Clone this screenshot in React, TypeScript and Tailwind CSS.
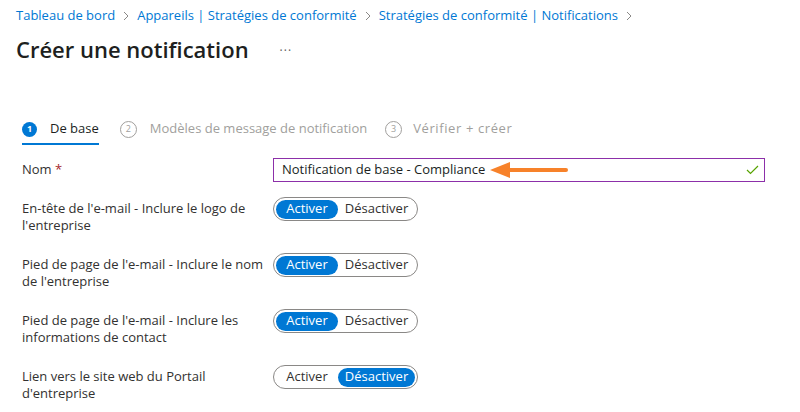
import React from "react";

const crumbs = [
  "Tableau de bord",
  "Appareils | Stratégies de conformité",
  "Stratégies de conformité | Notifications",
];

const steps = [
  { n: "1", label: "De base", active: true, gap: "mr-[21px]", ml: "ml-[13px] text-[13px]" },
  { n: "2", label: "Modèles de message de notification", active: false, gap: "mr-[18px]", ml: "ml-[13px] text-[13px]" },
  { n: "3", label: "Vérifier + créer", active: false, gap: "mr-0", ml: "ml-[11px] text-[13px] tracking-[0.6px]" },
];

const rows = [
  { label: "En-tête de l'e-mail - Inclure le logo de l'entreprise", on: true },
  { label: "Pied de page de l'e-mail - Inclure le nom de l'entreprise", on: true },
  { label: "Pied de page de l'e-mail - Inclure les informations de contact", on: true },
  { label: "Lien vers le site web du Portail d'entreprise", on: false },
];

const Chevron = () => (
  <svg width="8" height="12" viewBox="0 0 8 12" className="mx-[7px]">
    <path d="M2 2 L6 6 L2 10" fill="none" stroke="#8a8886" strokeWidth="1" />
  </svg>
);

const Toggle = ({ on }: { on: boolean }) => (
  <div className="flex h-[24px] w-[145px] shrink-0 items-center rounded-full border border-[#8a8886] px-[2px]">
    <span
      className={
        on
          ? "flex h-[19px] w-[62px] items-center justify-center rounded-full bg-[#0078d4] text-white"
          : "flex h-[19px] w-[62px] items-center justify-center text-[#323130]"
      }
    >
      Activer
    </span>
    <span
      className={
        on
          ? "flex h-[19px] flex-1 items-center justify-center text-[#323130]"
          : "flex h-[19px] flex-1 items-center justify-center rounded-full bg-[#0078d4] text-white"
      }
    >
      Désactiver
    </span>
  </div>
);

export default function App() {
  return (
    <div className="h-[412px] w-[800px] overflow-hidden bg-white text-[13px] text-[#323130] [font-family:'Open_Sans',sans-serif]">
      {/* Breadcrumb */}
      <div className="flex h-[32px] items-center pl-[16px] text-[#0078d4]">
        {crumbs.map((c) => (
          <React.Fragment key={c}>
            <span className="whitespace-nowrap">{c}</span>
            <Chevron />
          </React.Fragment>
        ))}
      </div>

      {/* Title */}
      <div className="mt-[3px] flex h-[28px] items-center pl-[16px]">
        <h1 className="text-[22px] font-semibold leading-[28px] text-[#201f1e]">Créer une notification</h1>
        <span className="ml-[31px] mt-[3px] text-[12px] tracking-[1px] text-[#605e5c]">···</span>
      </div>

      {/* Steps */}
      <div className="mt-[52px] flex pl-[22px]">
        {steps.map((s) => (
          <div
            key={s.n}
            className={
              (s.active
                ? "flex h-[30px] items-center border-b-[2px] border-[#0078d4] "
                : "flex h-[30px] items-center border-b-[2px] border-transparent ") + s.gap
            }
          >
            <span
              className={
                s.active
                  ? "flex h-[15px] w-[15px] items-center justify-center rounded-full bg-[#0078d4] text-[9px] font-bold text-white"
                  : "flex h-[17px] w-[17px] items-center justify-center rounded-full border border-[#a19f9d] text-[9px] text-[#a19f9d]"
              }
            >
              {s.n}
            </span>
            <span className={(s.active ? "text-[#201f1e] " : "text-[#a19f9d] ") + s.ml}>{s.label}</span>
          </div>
        ))}
      </div>

      {/* Form */}
      <div className="mt-[13px] pl-[22px]">
        <div className="flex items-center">
          <div className="w-[251px]">
            Nom <span className="text-[#a4262c]">*</span>
          </div>
          <div className="flex h-[24px] w-[492px] items-center border border-[#8c2fa9] pl-[8px] pr-[5px]">
            <span className="text-[#201f1e]">Notification de base - Compliance</span>
            <svg width="90" height="20" viewBox="0 0 90 20" className="ml-[4px]">
              <path d="M1 10 L21 2 L21 18 Z" fill="#f7822a" />
              <path d="M20 10 L77 10" stroke="#f7822a" strokeWidth="4" strokeLinecap="round" />
            </svg>
            <svg width="13" height="10" viewBox="0 0 13 10" className="ml-auto">
              <path d="M1 5 L4.5 8.5 L12 1" fill="none" stroke="#57a300" strokeWidth="1.2" />
            </svg>
          </div>
        </div>

        {rows.map((r, i) => (
          <div key={r.label} className={i === 0 ? "mt-[15px] flex items-start" : "mt-[19px] flex items-start"}>
            <div className="w-[251px] pr-[4px] pt-[3px] leading-[17px]">{r.label}</div>
            <Toggle on={r.on} />
          </div>
        ))}
      </div>
    </div>
  );
}
